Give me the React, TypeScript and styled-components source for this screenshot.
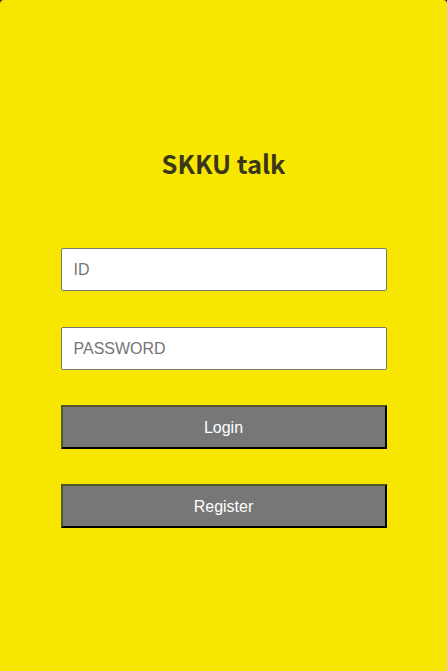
import React from "react";
import styled, { createGlobalStyle } from "styled-components";

const Global = createGlobalStyle`
  html, body { margin: 0; padding: 0; background: #2b2b2b; }
  #root { min-height: 100vh; }
`;

const Screen = styled.div`
  min-height: 700px;
  background: #f7e600;
  border-radius: 4px 4px 0 0;
  display: flex;
  flex-direction: column;
  align-items: center;
  padding-top: 145px;
  box-sizing: border-box;
`;

const Title = styled.h1`
  margin: 0;
  font-family: "Noto Sans CJK KR", "Noto Sans", sans-serif;
  font-weight: 700;
  font-size: 25.5px;
  line-height: 36px;
  color: #3a3719;
`;

const Form = styled.form`
  width: 326px;
  margin-top: 67px;
  display: flex;
  flex-direction: column;
`;

const Input = styled.input<{ $gap: number }>`
  box-sizing: border-box;
  width: 100%;
  height: 43px;
  border: 1px solid #7a7a6a;
  border-radius: 2px;
  background: #fff;
  padding: 0 12px;
  font-family: "Liberation Sans", Arial, sans-serif;
  font-size: 16px;
  color: #333;
  outline: none;
  margin: 0 0 ${(p) => p.$gap}px;
  &::placeholder { color: #757575; }
`;

const Button = styled.button<{ $gap?: number }>`
  box-sizing: border-box;
  width: 100%;
  height: 44px;
  background: #777777;
  color: #fff;
  font-family: "Liberation Sans", Arial, sans-serif;
  font-size: 16px;
  border-style: solid;
  border-width: 2px;
  border-color: #56552a #000 #000 #56552a;
  border-radius: 0;
  padding: 2px 0 0;
  margin: 0 0 ${(p) => p.$gap ?? 0}px;
  cursor: pointer;
`;

export default function App() {
  return (
    <>
      <Global />
      <Screen>
        <Title>SKKU talk</Title>
        <Form onSubmit={(e) => e.preventDefault()}>
          <Input placeholder="ID" $gap={36} />
          <Input placeholder="PASSWORD" type="password" $gap={35} />
          <Button type="submit" $gap={35}>Login</Button>
          <Button type="button">Register</Button>
        </Form>
      </Screen>
    </>
  );
}
